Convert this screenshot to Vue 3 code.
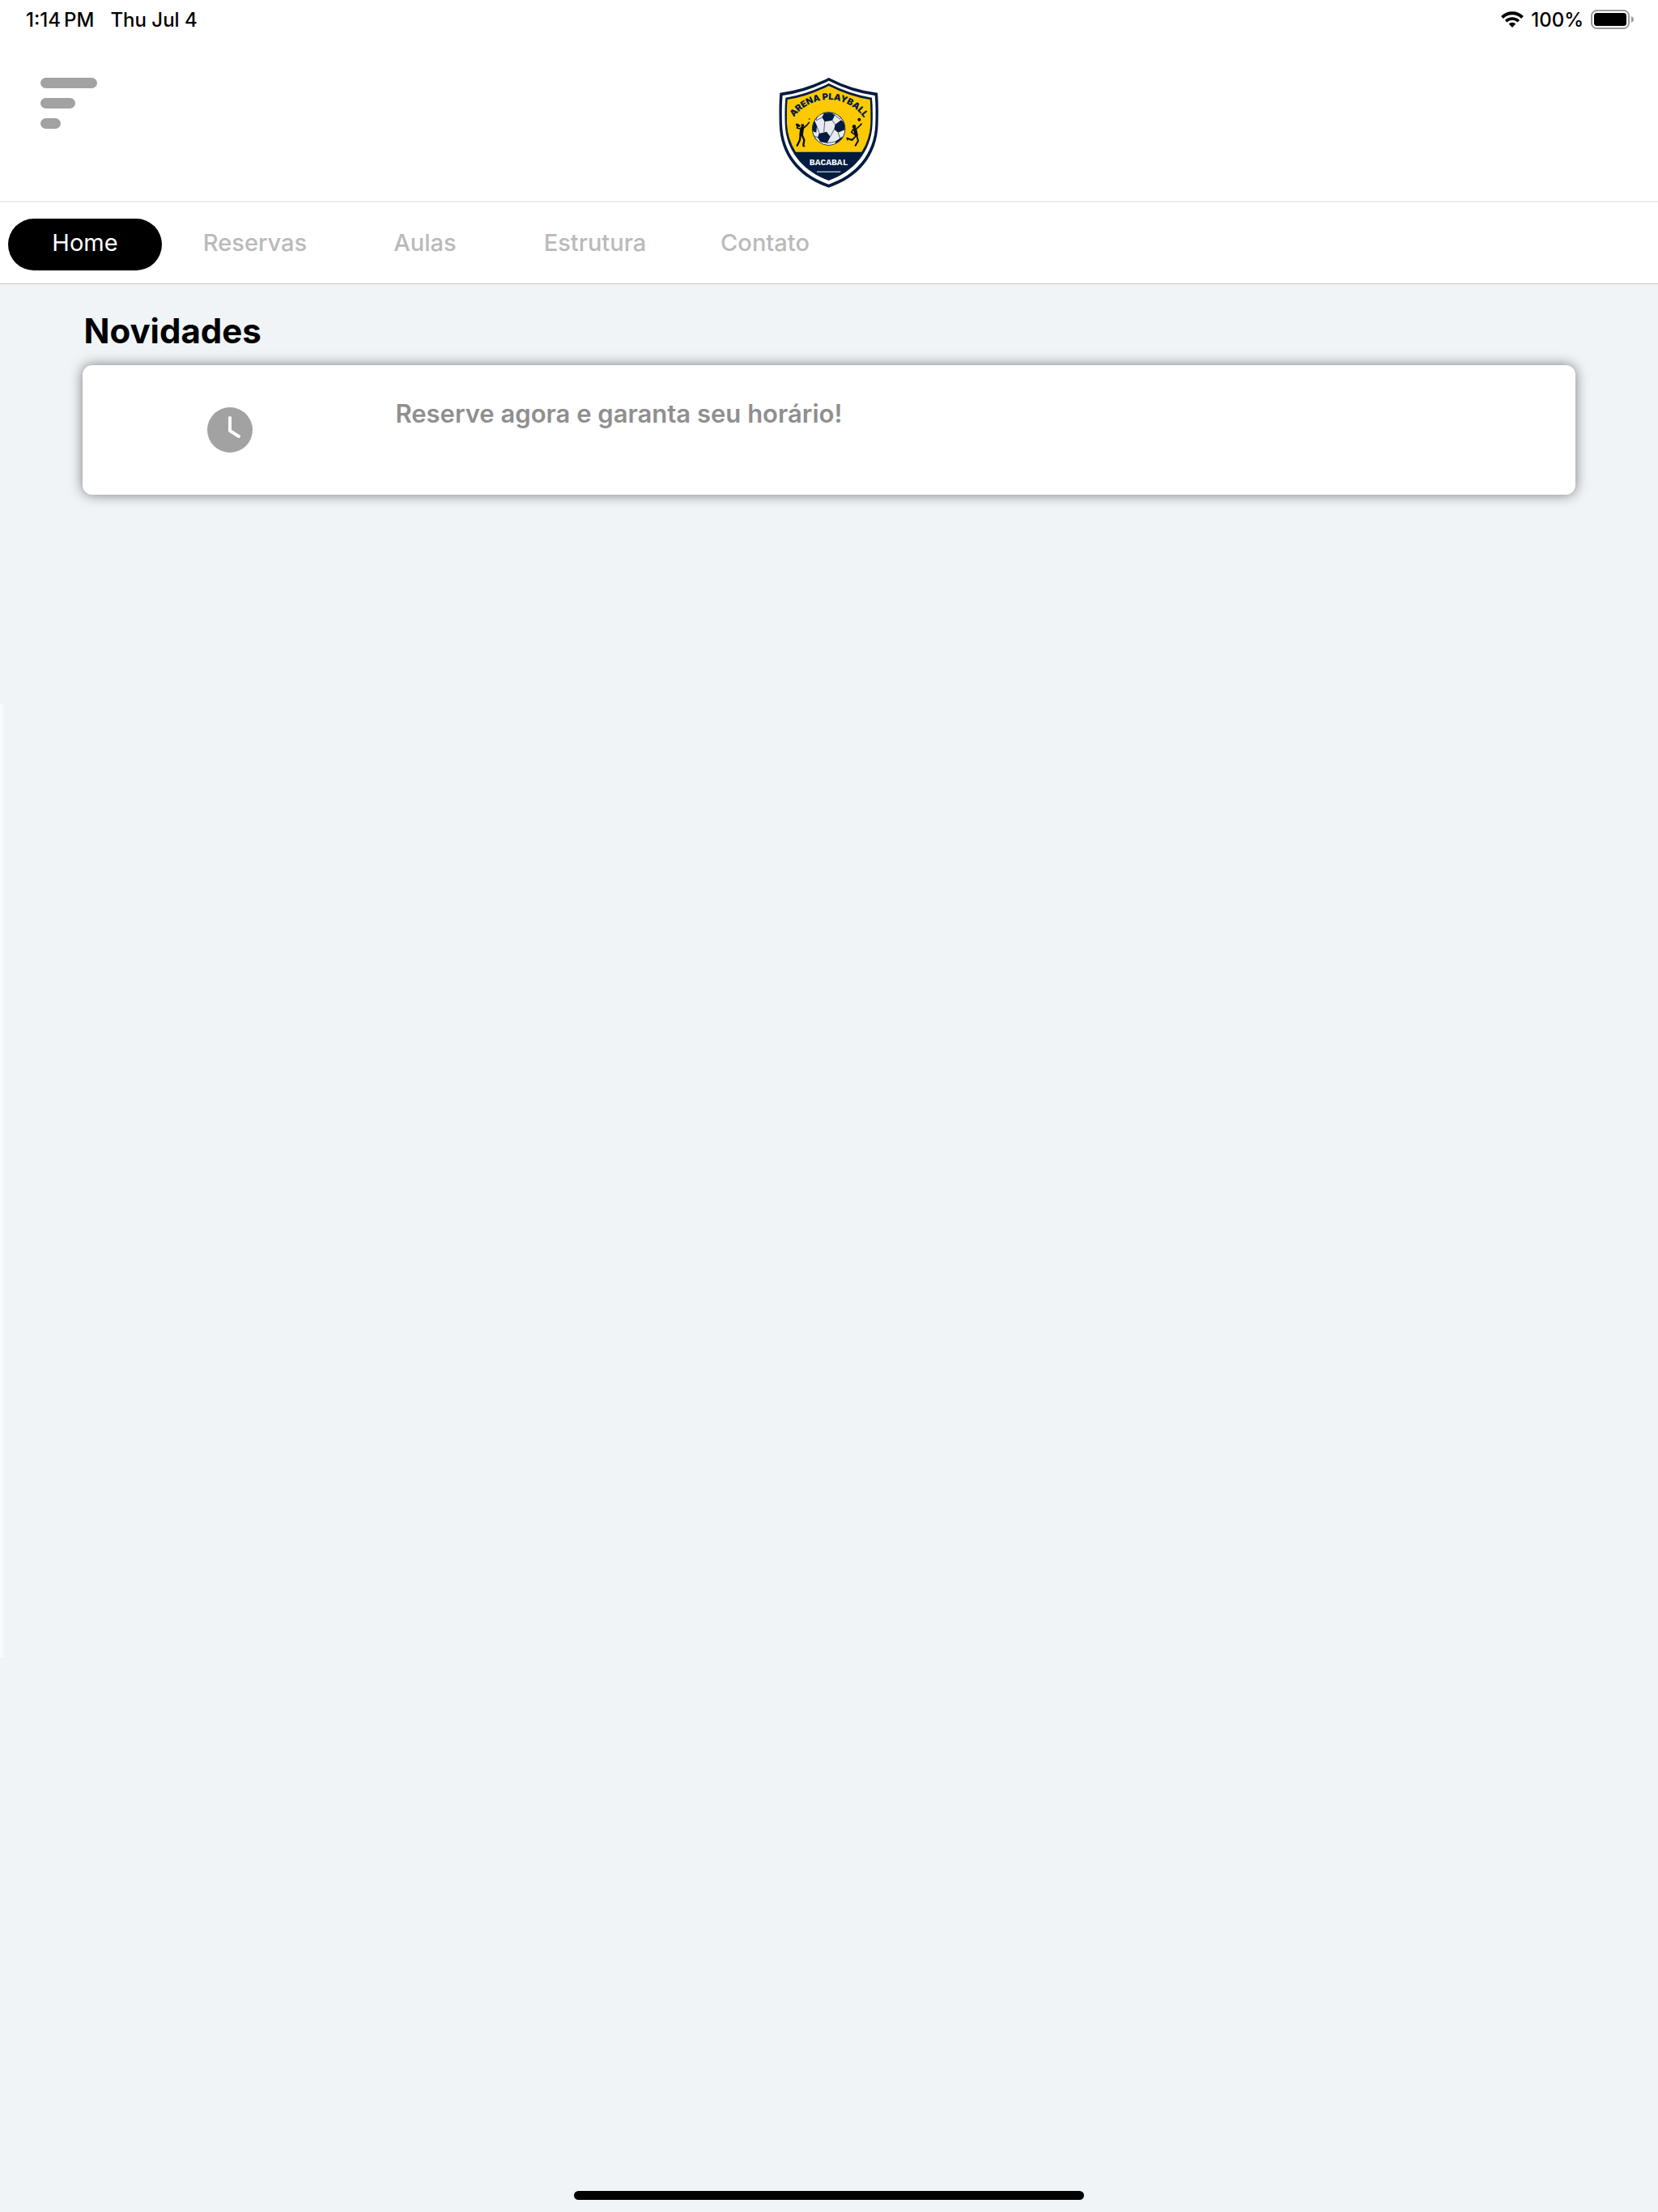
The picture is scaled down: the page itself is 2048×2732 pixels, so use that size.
<template>
  <div class="app">
    <div class="status-bar">
      <div class="status-left">
        <span>1:14&#8201;PM</span>
        <span>Thu Jul 4</span>
      </div>
      <div class="status-right">
        <svg class="wifi" viewBox="0 0 28 20" aria-hidden="true">
          <path d="M1.500 7.500a17.500 17.500 0 0 1 25 0" fill="none" stroke="#000" stroke-width="4" />
          <path d="M6.200 12.200a11 11 0 0 1 15.600 0" fill="none" stroke="#000" stroke-width="3.600" />
          <path d="M14 20l-4.300-4.400a6.200 6.200 0 0 1 8.600 0z" />
        </svg>
        <span>100%</span>
        <svg class="battery" viewBox="0 0 53 24" aria-hidden="true">
          <rect x="1" y="1" width="46" height="22" rx="6.500" fill="none" stroke="#9c9c9c" stroke-width="2" />
          <rect x="4" y="4" width="40" height="16" rx="3.500" />
          <path d="M50 8c4 1.500 4 6.500 0 8z" fill="#9c9c9c" />
        </svg>
      </div>
    </div>

    <header class="header">
      <button class="menu" aria-label="Menu">
        <span class="bar long"></span>
        <span class="bar medium"></span>
        <span class="bar short"></span>
      </button>
      <svg class="logo" viewBox="0 0 450 465" role="img" aria-label="Arena Playball Bacabal">
        <path d="M224 33Q310 78 405 89Q409 130 407 205C404 325 330 405 224 440C118 405 44 325 41 205Q39 130 43 89Q138 78 224 33Z" fill="#021b40" />
        <path d="M224 44Q308 87 395 99Q399 140 397 205C393 319 322 395 224 428C126 395 55 319 51 205Q49 140 53 99Q140 87 224 44Z" fill="#fff" />
        <path d="M224 54Q305 95 384 107Q388 145 386 205C382 311 312 383 224 414C136 383 66 311 62 205Q60 145 64 107Q143 95 224 54Z" fill="#021b40" />
        <path d="M224 63Q303 103 377 114Q380 145 379 205Q376 262 346 308H102Q72 262 69 205Q68 145 71 114Q145 103 224 63Z" fill="#fdc903" />
        <path id="arc" d="M94 181A160 160 0 0 1 355 183" fill="none" />
        <text class="logo-name" text-anchor="middle">
          <textPath href="#arc" startOffset="50%">ARENA PLAYBALL</textPath>
        </text>
        <!-- ball -->
        <clipPath id="ball"><circle cx="224" cy="222" r="60" /></clipPath>
        <circle cx="224" cy="222" r="62" fill="#021b40" />
        <g clip-path="url(#ball)">
          <circle cx="224" cy="222" r="60" fill="#e9e9ef" />
          <g fill="#021b40">
            <path d="M207 165l24-4 16 10-10 20-28 5-10-17z" />
            <path d="M248 206l22-16 15 12-2 24-24 10-15-12z" />
            <path d="M188 240l28-7 14 18-12 24-25-4-10-17z" />
            <path d="M160 205l12-12 8 18-2 25-15-5z" />
            <path d="M248 269l18-12 12-8-5 20-23 15z" />
            <path d="M165 185l12-16 8 3-7 16z" />
            <path d="M257 170l13 5 10 14-9-3z" />
          </g>
          <path d="M199 180l-22 12M209 196l-3 38M237 191l12 16M247 172l20 16M180 213l10 27M244 224l-14 27M259 236l7 22M218 275l30-5M183 254l-12-5M283 226l8 4M207 165l-16-1" fill="none" stroke="#021b40" stroke-width="2" />
        </g>
        <!-- tennis player -->
        <g fill="none" stroke="#080d10" stroke-linecap="round" stroke-linejoin="round">
          <path d="M125 221L122 243" stroke-width="14" />
          <path d="M131 219L144 208L151 199" stroke-width="5" />
          <path d="M117 222L106 219L110 210" stroke-width="5" />
          <path d="M119 247L117 264L107 284M126 247L133 264L130 284" stroke-width="7" />
          <path d="M130 287h5" stroke-width="4" />
        </g>
        <g fill="#080d10">
          <circle cx="127" cy="210" r="6" />
          <ellipse cx="110" cy="209" rx="9" ry="5" transform="rotate(25 110 209)" />
          <circle cx="152" cy="186" r="2.500" />
        </g>
        <!-- volleyball player -->
        <g fill="none" stroke="#080d10" stroke-linecap="round" stroke-linejoin="round">
          <path d="M321 223L326 246" stroke-width="13" />
          <path d="M329 220L339 211L345 204" stroke-width="5" />
          <path d="M315 223L308 235L318 242" stroke-width="5" />
          <path d="M321 253L310 264L292 257M329 252L333 267L323 284" stroke-width="6" />
          <path d="M292 257l2 7" stroke-width="4" />
        </g>
        <g fill="#080d10">
          <circle cx="318" cy="214" r="7" />
          <circle cx="337" cy="188" r="6" />
        </g>
        <text class="logo-city" x="224" y="358" text-anchor="middle">BACABAL</text>
        <rect x="180" y="380" width="88" height="3" fill="#fff" />
      </svg>
    </header>

    <nav class="tabs">
      <a
        v-for="t in tabs"
        :key="t"
        href="#"
        :class="['tab', { active: currentTab === t }]"
        @click.prevent="currentTab = t"
      >{{ t }}</a>
    </nav>

    <main class="content">
      <h1>Novidades</h1>
      <div class="card">
        <div class="card-icon">
          <svg class="clock" viewBox="0 0 56 56" aria-hidden="true">
            <circle cx="28" cy="28" r="28" fill="#a2a2a2" />
            <path d="M28 13v16l11 7" fill="none" stroke="#fff" stroke-width="4" stroke-linecap="round" stroke-linejoin="round" />
          </svg>
        </div>
        <p>Reserve agora e garanta seu horário!</p>
      </div>
    </main>

    <div class="edge-glow"></div>
    <div class="home-indicator"></div>
  </div>
</template>

<script setup>
import { ref } from 'vue'

const tabs = ['Home', 'Reservas', 'Aulas', 'Estrutura', 'Contato']
const currentTab = ref('Home')
</script>

<style>
body { margin: 0; background: #f0f4f7; }
</style>

<style scoped>
.app { position: relative; min-height: 100vh; display: flex; flex-direction: column; background: #f0f4f7; font-family: Inter, "Liberation Sans", sans-serif; color: #000; overflow: hidden; }
.status-bar { display: flex; justify-content: space-between; align-items: center; height: 48px; padding: 0 30px 0 32px; background: #fff; font-size: 24px; font-weight: 500; }
.status-left { display: flex; gap: 20px; }
.status-right { display: flex; align-items: center; gap: 9px; }
.wifi { width: 28px; height: 20px; }
.battery { width: 53px; height: 24px; }
.header { display: grid; grid-template-columns: 1fr auto 1fr; align-items: start; height: 200px; padding: 0 50px; background: #fff; border-bottom: 2px solid #ececec; }
.menu { display: flex; flex-direction: column; align-items: flex-start; gap: 12px; width: 70px; margin-top: 48px; padding: 0; border: none; background: none; cursor: pointer; }
.bar { height: 13px; border-radius: 7px; background: #a2a2a2; }
.bar.long { width: 70px; }
.bar.medium { width: 43px; }
.bar.short { width: 25px; }
.logo { width: 150px; height: 155px; margin-top: 37px; }
.logo-name { font-size: 33px; font-weight: 900; fill: #021b40; }
.logo-city { font-family: "Liberation Mono", monospace; font-size: 34px; font-weight: 700; fill: #fff; }
.tabs { display: flex; height: 101px; align-items: center; background: #fff; border-bottom: 1px solid #c5cacd; box-sizing: border-box; }
.tab { width: 190px; height: 64px; margin: 3px 10px 0; border-radius: 32px; box-sizing: border-box; padding-bottom: 4px; display: flex; align-items: center; justify-content: center; font-size: 29px; font-weight: 500; color: #bababa; text-decoration: none; }
.tab.active { background: #000; color: #fff; font-weight: 400; }
.content { flex: 1; padding: 32px 5%; }
h1 { margin: 0 0 16px; padding-left: 1px; font-size: 42px; line-height: 52px; font-weight: 700; }
.card { display: flex; height: 160px; border-radius: 12px; background: #fff; box-shadow: 0 0 16px rgba(0,0,0,.5); }
.card-icon { display: flex; align-items: center; justify-content: center; width: 364px; }
.clock { width: 56px; height: 56px; }
.card p { margin: 40px 0 0 22px; font-size: 31px; line-height: 40px; font-weight: 600; color: #8f8f8f; }
.edge-glow { position: absolute; left: 0; top: 870px; bottom: 685px; width: 8px; background: linear-gradient(to right, rgba(255,255,255,.7), rgba(255,255,255,0)); }
.home-indicator { align-self: center; width: 630px; height: 11px; margin-bottom: 15px; border-radius: 6px; background: #000; }
</style>
